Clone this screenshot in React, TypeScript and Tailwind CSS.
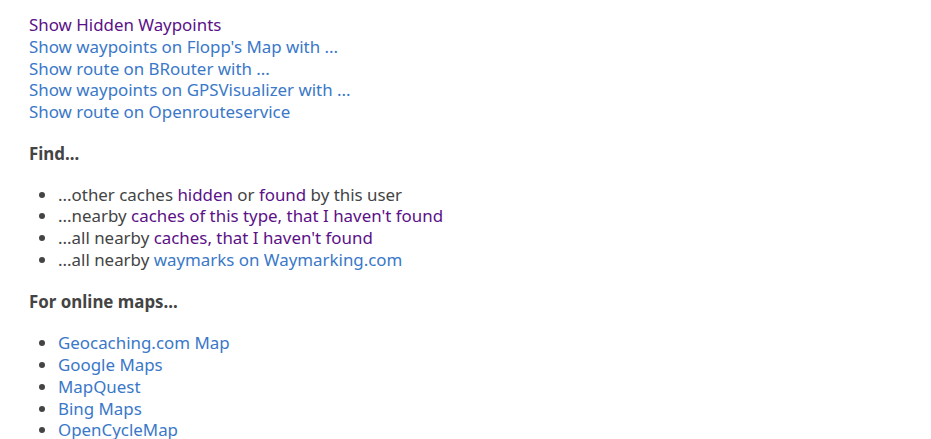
import React from "react";

const linkBlue = "text-[#3a78c8]";
const visited = "text-[#5b1187]";

export default function App() {
  const maps = ["Geocaching.com Map", "Google Maps", "MapQuest", "Bing Maps", "OpenCycleMap"];

  return (
    <div className="min-h-[439px] bg-white pl-[29px] pt-[14px] text-[16.9px] leading-[21.75px] text-[#444] [font-family:'Noto_Sans',sans-serif]">
      <div className="flex flex-col items-start">
        <a className={visited}>Show Hidden Waypoints</a>
        <a className={linkBlue}>Show waypoints on Flopp's Map with ...</a>
        <a className={linkBlue}>Show route on BRouter with ...</a>
        <a className={linkBlue}>Show waypoints on GPSVisualizer with ...</a>
        <a className={linkBlue}>Show route on Openrouteservice</a>
      </div>

      <p className="mt-[20px] font-bold">Find...</p>
      <ul className="mt-[19px] list-disc pl-[29px]">
        <li>
          ...other caches <a className={visited}>hidden</a> or <a className={visited}>found</a> by this user
        </li>
        <li>
          ...nearby <a className={visited}>caches of this type, that I haven't found</a>
        </li>
        <li>
          ...all nearby <a className={visited}>caches, that I haven't found</a>
        </li>
        <li>
          ...all nearby <a className={linkBlue}>waymarks on Waymarking.com</a>
        </li>
      </ul>

      <p className="mt-[20px] font-bold">For online maps...</p>
      <ul className="mt-[20px] list-disc pl-[29px]">
        {maps.map((m) => (
          <li key={m}>
            <a className={linkBlue}>{m}</a>
          </li>
        ))}
      </ul>
    </div>
  );
}
